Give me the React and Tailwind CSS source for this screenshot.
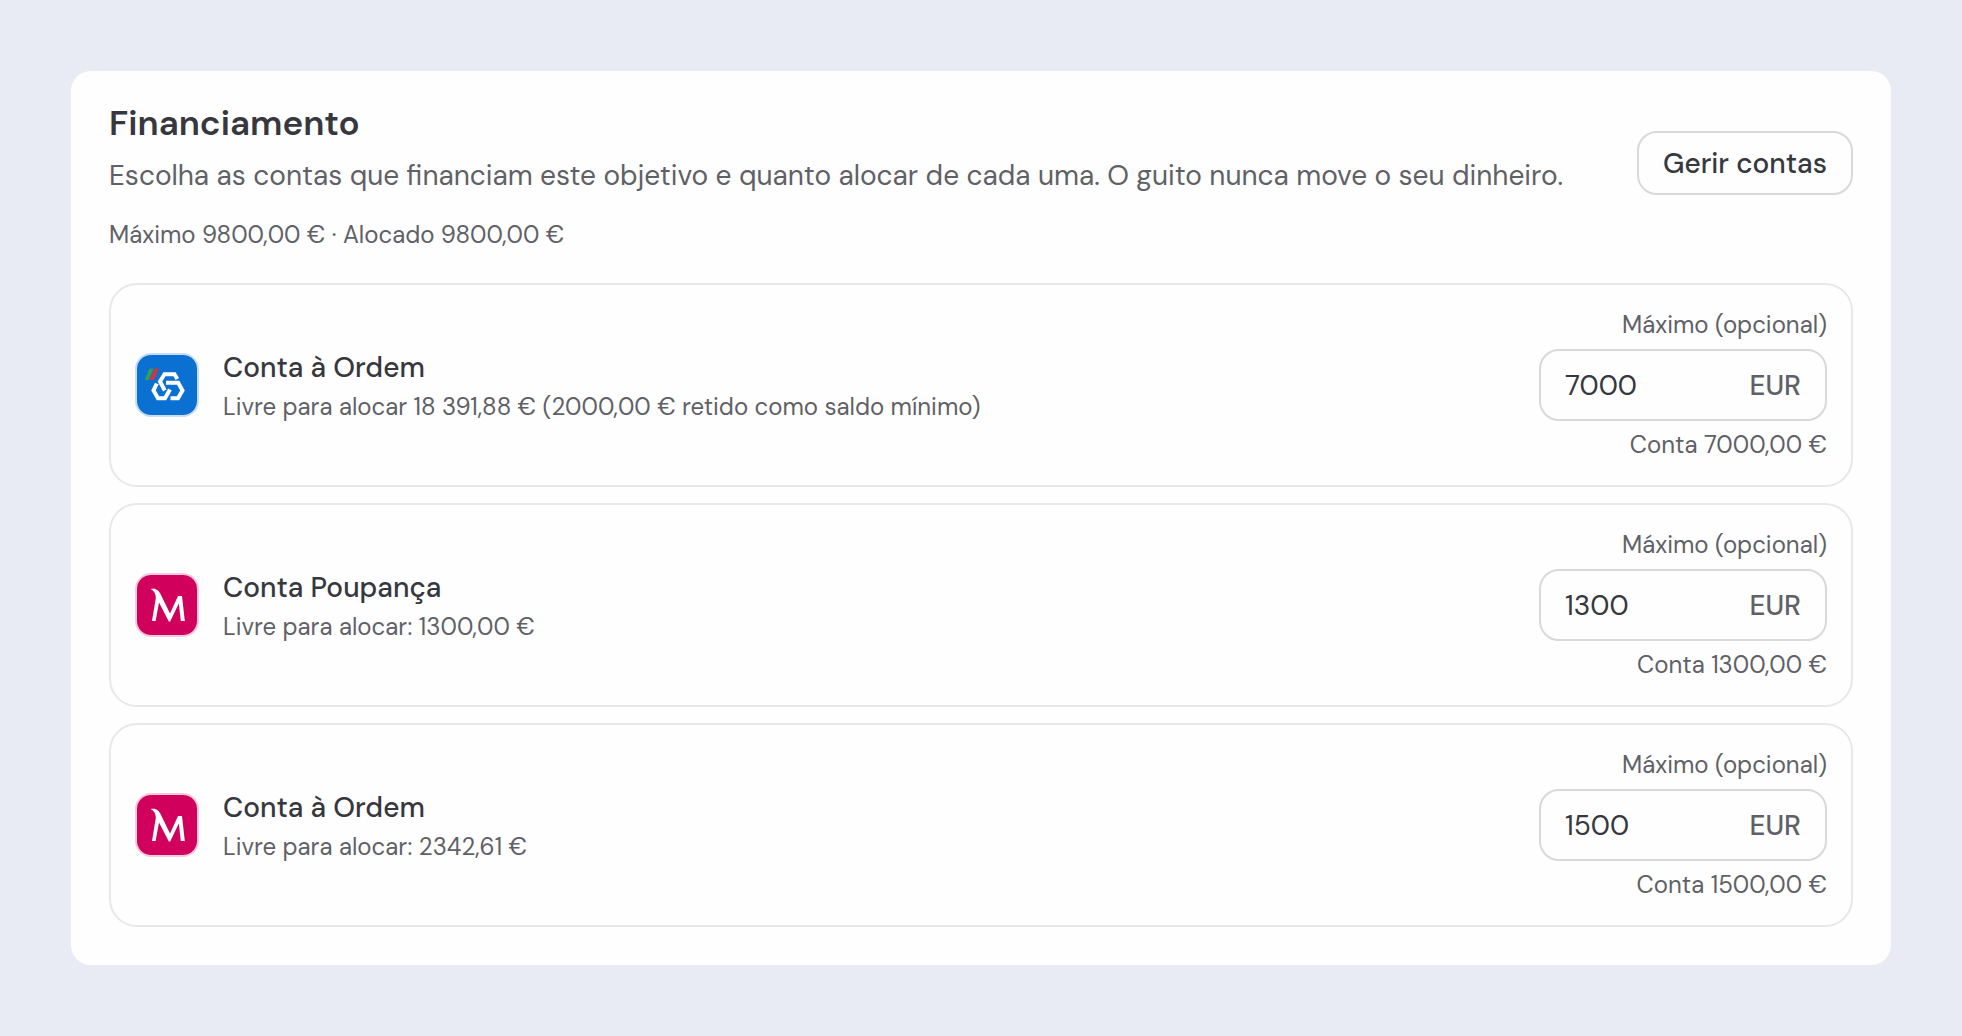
import { useState } from 'react';

const ACCOUNTS = [
  {
    id: 'cgd-ordem',
    bank: 'cgd',
    name: 'Conta à Ordem',
    free: 'Livre para alocar 18 391,88 € (2000,00 € retido como saldo mínimo)',
    max: '7000',
    counts: 'Conta 7000,00 €',
  },
  {
    id: 'bcp-poupanca',
    bank: 'bcp',
    name: 'Conta Poupança',
    free: 'Livre para alocar: 1300,00 €',
    max: '1300',
    counts: 'Conta 1300,00 €',
  },
  {
    id: 'bcp-ordem',
    bank: 'bcp',
    name: 'Conta à Ordem',
    free: 'Livre para alocar: 2342,61 €',
    max: '1500',
    counts: 'Conta 1500,00 €',
  },
];

function CgdLogo() {
  return (
    <svg viewBox="0 0 60 60" className="size-full bg-[#0a70d2]" aria-hidden="true">
      <path d="M12.500 13.500h4.200l-4.800 11.500H7.500z" fill="#2f9e5b" />
      <path d="M17.600 13.500h4.200l-4.700 11.500h-4.400z" fill="#d8333f" />
      <g fill="none" stroke="#fff" strokeWidth="4">
        <path d="M40.300 24 37.500 19.300H27.500L23 26.500 27.800 35.500" />
        <path d="M29 27.800H41.200L45.500 35.500 41 43.300H33.500" />
        <path d="M19.800 28.500 16.500 35.500 21 43.300H28L33 34.500" />
      </g>
    </svg>
  );
}

function BcpLogo() {
  return (
    <svg viewBox="0 0 60 60" className="size-full bg-[#d1005d]" aria-hidden="true">
      <path
        d="M13.700 14C19 13 22 15.500 24 20L33 38.500 41 21H45L47.800 46H43.800L41.800 28.500 33.200 46.500H31.800L22 27.500 18.600 46H15L18.800 23C18.800 18.500 17 15.500 13.700 14Z"
        fill="#fff"
      />
    </svg>
  );
}

function BankBadge({ bank }) {
  const border = bank === 'cgd' ? 'border-[#c9dcf2]' : 'border-[#f1cbdd]';
  return (
    <div className={`size-16 shrink-0 overflow-hidden rounded-2xl border-2 ${border}`}>
      {bank === 'cgd' ? <CgdLogo /> : <BcpLogo />}
    </div>
  );
}

function AccountRow({ account }) {
  const [max, setMax] = useState(account.max);

  return (
    <li className="flex items-center gap-6 rounded-[28px] border-2 border-[#e8e8e9] p-6">
      <BankBadge bank={account.bank} />
      <div className="min-w-0 flex-1 pt-0.5">
        <p className="text-[28px] leading-[42px] font-medium">{account.name}</p>
        <p className="text-2xl leading-9 text-[#5f6167]">{account.free}</p>
      </div>
      <div className="flex w-72 shrink-0 flex-col gap-2 text-right text-2xl leading-8 text-[#5f6167]">
        <label htmlFor={account.id}>Máximo (opcional)</label>
        <div className="flex h-18 items-center rounded-[20px] border-2 border-[#d9d9da] px-6 pt-0.5 text-[28px]">
          <input
            id={account.id}
            inputMode="decimal"
            value={max}
            onChange={(e) => setMax(e.target.value)}
            className="w-0 min-w-0 flex-1 bg-transparent text-[#36383e] outline-none"
          />
          <span className="font-medium">EUR</span>
        </div>
        <p>{account.counts}</p>
      </div>
    </li>
  );
}

export default function App() {
  return (
    <main className="min-h-screen bg-[#e8ebf4] p-[71px] font-['DM_Sans',Inter,sans-serif] text-[#36383e]">
      <section className="rounded-[20px] bg-[#fefefe] p-[38px]">
        <header className="flex items-end justify-between gap-6">
          <div>
            <h2 className="text-[35px] leading-7 font-semibold">Financiamento</h2>
            <p className="mt-5 text-[28px] leading-[38px] text-[#5f6167]">
              Escolha as contas que financiam este objetivo e quanto alocar de cada uma. O guito nunca move o seu dinheiro.
            </p>
          </div>
          <button
            type="button"
            className="h-16 shrink-0 rounded-[20px] border-2 border-[#d9d9da] px-6 pt-0.5 text-[28px] font-medium"
          >
            Gerir contas
          </button>
        </header>
        <p className="mt-6 text-2xl leading-8 text-[#5f6167]">Máximo 9800,00 € · Alocado 9800,00 €</p>
        <ul className="mt-8 flex flex-col gap-4">
          {ACCOUNTS.map((a) => <AccountRow key={a.id} account={a} />)}
        </ul>
      </section>
    </main>
  );
}
